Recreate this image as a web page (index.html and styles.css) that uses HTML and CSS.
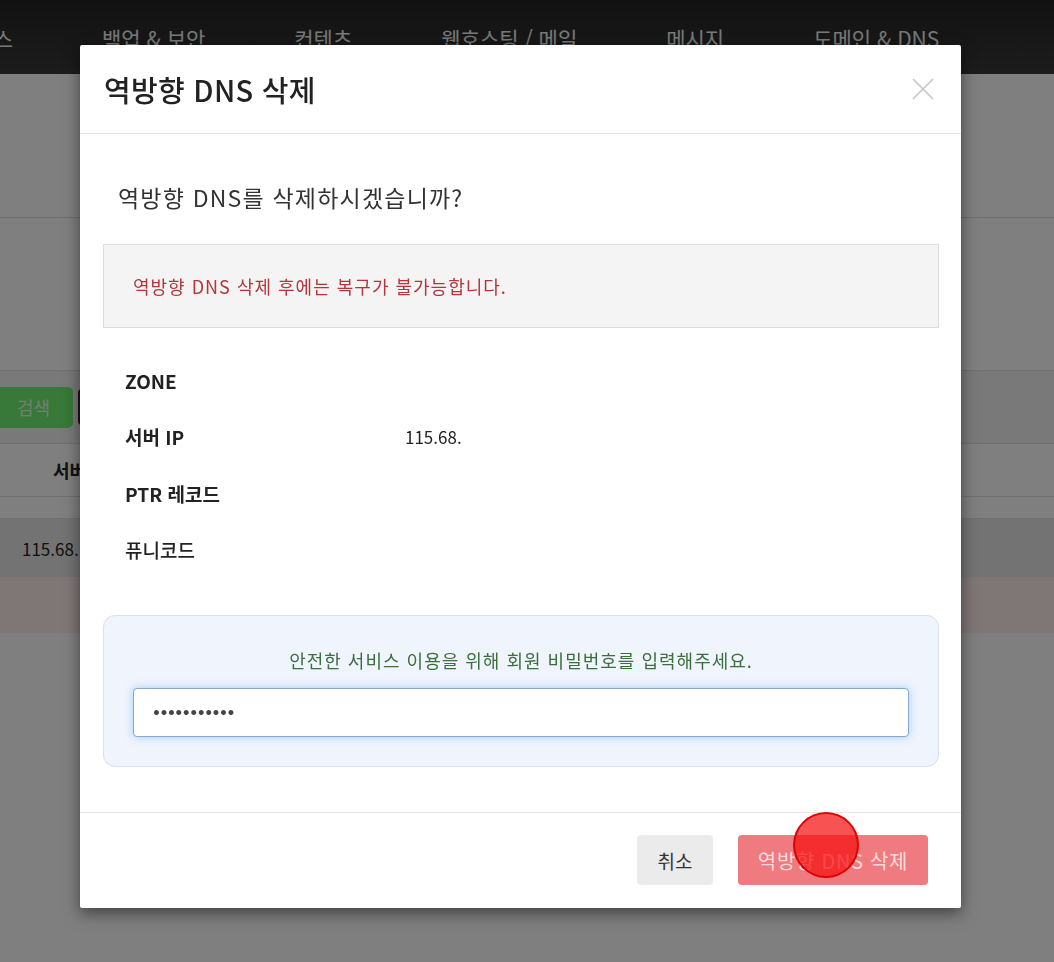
FILE: index.html
```html
<!DOCTYPE html>
<html lang="ko">
<head>
<meta charset="utf-8">
<title>역방향 DNS 삭제</title>
<link rel="stylesheet" href="styles.css">
</head>
<body>
<div class="page">
  <header class="gnb">
    <nav class="gnb-menu">
      <span class="gnb-item first">서비스</span>
      <span class="gnb-item">백업 &amp; 보안</span>
      <span class="gnb-item">컨텐츠</span>
      <span class="gnb-item">웹호스팅 / 메일</span>
      <span class="gnb-item">메시지</span>
      <span class="gnb-item">도메인 &amp; DNS</span>
    </nav>
  </header>
  <div class="subhead"></div>
  <div class="spacer-a"></div>
  <div class="searchbar">
    <button class="btn-search" type="button">검색</button>
    <button class="btn-other" type="button">등록</button>
  </div>
  <div class="thead"><span class="th">서버 IP</span></div>
  <div class="spacer-b"></div>
  <div class="trow"><span class="td">115.68.</span></div>
  <div class="trow pink"></div>
</div>

<div class="overlay"></div>

<div class="modal" role="dialog">
  <div class="modal-header">
    <h4 class="modal-title">역방향 DNS 삭제</h4>
    <button class="close" type="button" aria-label="닫기">
      <svg width="24" height="24" viewBox="0 0 24 24"><path d="M2 2 L22 22 M22 2 L2 22" stroke="#c6c6c6" stroke-width="1.7" fill="none"/></svg>
    </button>
  </div>
  <div class="modal-body">
    <p class="question">역방향 DNS를 삭제하시겠습니까?</p>
    <div class="alert">역방향 DNS 삭제 후에는 복구가 불가능합니다.</div>
    <dl class="info">
      <div class="info-row"><dt>ZONE</dt><dd></dd></div>
      <div class="info-row"><dt>서버 IP</dt><dd>115.68.</dd></div>
      <div class="info-row"><dt>PTR 레코드</dt><dd></dd></div>
      <div class="info-row"><dt class="light">퓨니코드</dt><dd></dd></div>
    </dl>
    <div class="pw-box">
      <p class="pw-text">안전한 서비스 이용을 위해 회원 비밀번호를 입력해주세요.</p>
      <input class="pw-input" type="password" value="abcdefghijk">
    </div>
  </div>
  <div class="modal-footer">
    <button class="btn btn-cancel" type="button">취소</button>
    <button class="btn btn-delete" type="button">역방향 DNS 삭제</button>
  </div>
</div>

<div class="click-mark"></div>
</body>
</html>
```
FILE: styles.css
```css
html, body {
  margin: 0;
  padding: 0;
}
body {
  width: 1054px;
  height: 962px;
  overflow: hidden;
  background: #fff;
  font-family: "Noto Sans CJK KR", "Noto Sans", sans-serif;
  color: #333;
}

/* background page */
.page {
  width: 1054px;
}
.gnb {
  height: 74px;
  background: linear-gradient(#222, #3a3a3a);
  display: flex;
  align-items: center;
}
.gnb-menu {
  display: flex;
  gap: 89px;
  margin-left: -45px;
  padding-top: 2px;
}
.gnb-item {
  font-size: 21px;
  color: #f2f2f2;
  white-space: nowrap;
}
.subhead {
  height: 143px;
  border-bottom: 1px solid #dcdcdc;
}
.spacer-a {
  height: 152px;
}
.searchbar {
  height: 72px;
  background: #f3f3f3;
  border-top: 1px solid #dedede;
  border-bottom: 1px solid #dedede;
  display: flex;
  align-items: center;
  gap: 5px;
}
.btn-search {
  margin-left: -20px;
  width: 93px;
  height: 41px;
  border: 0;
  border-radius: 5px;
  background: #70f070;
  color: #e0ffe0;
  font-family: inherit;
  font-size: 18px;
  padding-left: 20px;
}
.btn-other {
  width: 60px;
  height: 36px;
  border: 0;
  border-radius: 4px;
  background: #3a2a2a;
  color: #fff;
  font-family: inherit;
}
.thead {
  height: 52px;
  border-bottom: 1px solid #dedede;
  display: flex;
  align-items: center;
}
.th {
  margin-left: 53px;
  font-size: 18px;
  font-weight: 700;
  color: #222;
  white-space: nowrap;
}
.spacer-b {
  height: 21px;
  border-bottom: 1px solid #dedede;
}
.trow {
  height: 58px;
  background: #e6e6e6;
  display: flex;
  align-items: center;
}
.trow.pink {
  height: 56px;
  background: #ffeded;
}
.td {
  margin-left: 22px;
  font-size: 17px;
  color: #222;
}

.overlay {
  position: fixed;
  inset: 0;
  background: rgba(0, 0, 0, 0.5);
}

/* modal */
.modal {
  position: absolute;
  top: 45px;
  left: 80px;
  width: 881px;
  height: 863px;
  background: #fff;
  border-radius: 2px;
  box-shadow: 0 5px 16px rgba(0, 0, 0, 0.5);
  display: flex;
  flex-direction: column;
}
.modal-header {
  height: 88px;
  border-bottom: 1px solid #e5e5e5;
  display: flex;
  align-items: center;
  justify-content: space-between;
  padding: 0 26px 0 24px;
}
.modal-title {
  margin: 0;
  font-size: 29px;
  font-weight: 500;
  color: #222;
  letter-spacing: 0.3px;
}
.close {
  border: 0;
  background: none;
  padding: 0;
  width: 24px;
  height: 24px;
  display: flex;
}
.modal-body {
  flex: 1;
  padding: 47px 22px 0 23px;
}
.question {
  margin: 0 0 0 15px;
  font-size: 23px;
  line-height: 32px;
  letter-spacing: 1.2px;
  color: #333;
}
.alert {
  margin-top: 31px;
  height: 84px;
  box-sizing: border-box;
  border: 1px solid #dcdcdc;
  background: #f4f4f4;
  padding: 0 29px;
  display: flex;
  align-items: center;
  font-size: 18px;
  letter-spacing: 1px;
  color: #b3363c;
}
.info {
  margin: 24px 0 0;
  padding-left: 22px;
}
.info-row {
  height: 56.5px;
  display: flex;
  align-items: center;
}
.info-row dt {
  width: 280px;
  font-size: 19px;
  font-weight: 700;
  color: #222;
}
.info-row dt.light {
  font-weight: 500;
}
.info-row dd {
  margin: 0;
  font-size: 17px;
  color: #222;
}
.pw-box {
  margin-top: 37px;
  height: 152px;
  box-sizing: border-box;
  border: 1px solid #d8e1ee;
  border-radius: 12px;
  background: #eff4fd;
  padding: 32px 29px 0;
  display: flex;
  flex-direction: column;
}
.pw-text {
  margin: 0;
  text-align: center;
  font-size: 18px;
  line-height: 24px;
  letter-spacing: 1px;
  color: #3d6e3d;
}
.pw-input {
  margin-top: 16px;
  height: 49px;
  box-sizing: border-box;
  border: 1px solid #86a9cc;
  border-radius: 4px;
  background: #fff;
  box-shadow: 0 0 8px rgba(102, 175, 233, 0.55);
  padding: 0 18px;
  font-family: "DejaVu Sans", sans-serif;
  font-size: 14px;
  font-weight: 700;
  letter-spacing: -1.5px;
  color: #444;
  outline: none;
}
.modal-footer {
  border-top: 1px solid #e5e5e5;
  padding: 22px 33px 23px 0;
  display: flex;
  justify-content: flex-end;
  gap: 25px;
}
.btn {
  height: 50px;
  border: 0;
  border-radius: 4px;
  font-family: inherit;
  font-size: 19px;
  padding: 0;
}
.btn-cancel {
  width: 76px;
  background: #ebebeb;
  color: #333;
}
.btn-delete {
  width: 190px;
  background: #ef7b80;
  color: #fcdcdc;
  font-size: 20px;
  letter-spacing: 0.7px;
}

.click-mark {
  position: absolute;
  left: 793px;
  top: 812px;
  width: 66px;
  height: 66px;
  box-sizing: border-box;
  border-radius: 50%;
  background: rgba(245, 15, 15, 0.72);
  border: 2px solid rgba(220, 0, 0, 0.95);
}
```
